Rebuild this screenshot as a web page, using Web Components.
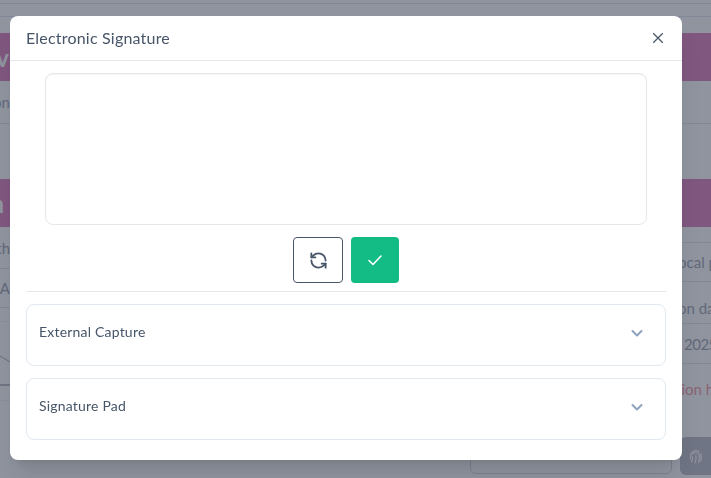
<!DOCTYPE html>
<html lang="en">
<head>
<meta charset="utf-8">
<title>Electronic Signature</title>
<style>
  html, body { margin: 0; height: 100%; overflow: hidden; }
  body { font-family: Lato, "Noto Sans", sans-serif; background: #fff; }
</style>
</head>
<body>
<page-behind></page-behind>
<signature-modal heading="Electronic Signature">
  <accordion-row label="External Capture"></accordion-row>
  <accordion-row label="Signature Pad"></accordion-row>
</signature-modal>

<script>
class PageBehind extends HTMLElement {
  connectedCallback() {
    const shadow = this.attachShadow({ mode: 'open' });
    shadow.innerHTML = `
      <style>
        :host {
          display: flex;
          flex-direction: column;
          height: 478px;
          overflow: hidden;
          color: #a4a9b3;
          font-size: 15px;
        }
        .topbar { height: 12px; margin-top: 3px; border-top: 1px solid #e2e8f0; border-bottom: 1px solid #e2e8f0; }
        .band {
          flex: none;
          height: 48px;
          background: #e086bf;
          color: #fff;
          display: flex;
          align-items: center;
          font-size: 24px;
          font-weight: 700;
        }
        .band span { flex: none; width: 9px; display: flex; justify-content: flex-end; overflow: hidden; white-space: nowrap; }
        .first { margin-top: 16px; }
        .sub { height: 42px; display: flex; align-items: center; border-bottom: 1px solid #e2e8f0; }
        .clip { flex: none; width: 10px; display: flex; justify-content: flex-end; overflow: hidden; white-space: nowrap; }
        .second { margin-top: 55px; }
        .second span { width: 4px; }
        .cols { flex: 1; display: flex; justify-content: space-between; }
        .left { width: 60px; display: flex; flex-direction: column; }
        .left .row { height: 38px; display: flex; align-items: center; border-bottom: 1px solid #e2e8f0; }
        .left .row:first-child { height: 41px; }
        .chart { display: block; margin-top: 13px; }
        .right { width: 241px; display: flex; flex-direction: column; }
        .right .row { display: flex; align-items: center; border-bottom: 1px solid #e2e8f0; white-space: nowrap; }
        .gap { height: 15px; border-bottom: 1px solid #e2e8f0; }
        .warn { height: 50px; display: flex; align-items: center; color: #f59ca5; white-space: nowrap; padding-left: 174px; }
        .actions { display: flex; gap: 8px; margin-top: 23px; }
        .input {
          flex: none;
          width: 202px;
          height: 37px;
          box-sizing: border-box;
          border: 1px solid #d5d9e0;
          border-radius: 6px;
          display: flex;
          align-items: center;
          justify-content: flex-end;
          padding: 0 50px 9px 0;
          font-size: 14px;
          white-space: nowrap;
        }
        .finger { flex: 1; height: 38px; background: #c1c1ca; border-radius: 6px 0 0 6px; display: flex; align-items: center; padding-left: 7px; }
      </style>
      <div class="topbar"></div>
      <div class="band first"><span>Rev</span></div>
      <div class="sub"><span class="clip">Version</span></div>
      <div class="band second"><span>Main</span></div>
      <div class="cols">
        <div class="left">
          <div class="row"><span class="clip">With</span></div>
          <div class="row"><span class="clip">A</span></div>
          <svg class="chart" width="60" height="80" viewBox="0 0 60 80" fill="none">
            <path d="M0 0H60" stroke="#e2e8f0"/>
            <path d="M0 35L12 42" stroke="#b0b4bc"/>
            <path d="M0 64H60" stroke="#a8acb4" stroke-width="1.5"/>
            <path d="M0 80H60" stroke="#e2e8f0"/>
          </svg>
        </div>
        <div class="right">
          <div class="gap"></div>
          <div class="row" style="height:38px;padding-left:164px">Fiscal local period</div>
          <div class="row" style="height:42px;padding-left:167px;padding-top:10px;box-sizing:border-box">Emission date</div>
          <div class="row" style="height:39px;padding-left:214px;letter-spacing:-0.5px">2025</div>
          <div class="warn">Emission hour</div>
          <div class="actions">
            <div class="input">Waiting for signing</div>
            <div class="finger">
              <svg width="18" height="18" viewBox="0 0 24 24" fill="none" stroke="#fff" stroke-width="1.6" stroke-linecap="round">
                <path d="M12 11v3c0 2.500-.4 4.800-1.200 7"/>
                <path d="M8.200 9.500A4.500 4.500 0 0 1 16.500 12c0 3-.3 5.800-1 8.500"/>
                <path d="M7.500 13c0 2.500-.4 4.700-1.300 6.500"/>
                <path d="M4.500 16c.3-1.300.5-2.600.5-4a7 7 0 0 1 11-5.700"/>
                <path d="M18.500 9c.4 1 .5 2 .5 3 0 2.500-.2 4.500-.6 6.500"/>
              </svg>
            </div>
          </div>
        </div>
      </div>
    `;
  }
}

class SignatureModal extends HTMLElement {
  connectedCallback() {
    const shadow = this.attachShadow({ mode: 'open' });
    shadow.innerHTML = `
      <style>
        :host {
          position: fixed;
          inset: 0;
          display: block;
          background: rgba(31, 41, 64, 0.5);
          color: #475569;
        }
        .dialog {
          position: absolute;
          left: 10px;
          top: 16px;
          width: 672px;
          height: 444px;
          background: #fff;
          border-radius: 8px;
          box-shadow: 0 20px 25px -5px rgba(0, 0, 0, 0.1), 0 8px 10px -6px rgba(0, 0, 0, 0.1);
          display: flex;
          flex-direction: column;
        }
        header {
          flex: none;
          height: 45px;
          box-sizing: border-box;
          padding: 0 16px 2px;
          display: flex;
          align-items: center;
          justify-content: space-between;
          border-bottom: 1px solid #e5e7eb;
          font-size: 16px;
          letter-spacing: 0.2px;
        }
        .close { width: 16px; height: 16px; padding: 0; border: 0; background: none; color: #475569; display: flex; transform: translateY(1px); }
        .body { padding: 12px 16px 0; display: flex; flex-direction: column; }
        .pad {
          align-self: center;
          width: 602px;
          height: 152px;
          box-sizing: border-box;
          border: 1px solid #e5e7eb;
          border-radius: 8px;
          box-shadow: inset 0 1px 2px rgba(0, 0, 0, 0.04);
        }
        .tools { display: flex; justify-content: center; gap: 8px; margin-top: 12px; }
        .tools button { height: 46px; padding: 0; border-radius: 4px; display: flex; align-items: center; justify-content: center; }
        .reset { width: 50px; background: #fff; border: 1px solid #475569; color: #475569; }
        .ok { width: 48px; background: #13bc85; border: 0; color: #fff; }
        hr { width: 100%; margin: 8px 0 12px; border: 0; border-top: 1px solid #e5e7eb; }
        .list { display: flex; flex-direction: column; gap: 12px; }
      </style>
      <div class="dialog">
        <header>
          <span>${this.getAttribute('heading')}</span>
          <button class="close" aria-label="Close">
            <svg width="16" height="16" viewBox="0 0 16 16" fill="none" stroke="currentColor" stroke-width="1.25"><path d="M3.250 3.250l9.500 9.500M12.750 3.250l-9.500 9.500"/></svg>
          </button>
        </header>
        <div class="body">
          <div class="pad"></div>
          <div class="tools">
            <button class="reset" aria-label="Reset">
              <svg width="19" height="19" viewBox="0 0 24 24" fill="none" stroke="currentColor" stroke-width="2.300" stroke-linecap="round" stroke-linejoin="round">
                <path d="M21 12a9 9 0 0 0-9-9 9.750 9.750 0 0 0-6.740 2.740L3 8"/>
                <path d="M3 3v5h5"/>
                <path d="M3 12a9 9 0 0 0 9 9 9.750 9.750 0 0 0 6.740-2.740L21 16"/>
                <path d="M16 16h5v5"/>
              </svg>
            </button>
            <button class="ok" aria-label="Confirm">
              <svg width="16" height="16" viewBox="0 0 16 16" fill="none" stroke="currentColor" stroke-width="1.6" stroke-linecap="round" stroke-linejoin="round"><path d="M2 8.500l4 4 8-8.500"/></svg>
            </button>
          </div>
          <hr>
          <div class="list"><slot></slot></div>
        </div>
      </div>
    `;
  }
}

class AccordionRow extends HTMLElement {
  connectedCallback() {
    const shadow = this.attachShadow({ mode: 'open' });
    shadow.innerHTML = `
      <style>
        :host {
          display: block;
          height: 62px;
          box-sizing: border-box;
          border: 1px solid #e2e8f0;
          border-radius: 8px;
          color: #475569;
          font-size: 14px;
          letter-spacing: 0.2px;
        }
        .head { display: flex; justify-content: space-between; align-items: flex-start; padding: 18px 20px 0 12px; }
        svg { display: block; margin-top: 2px; }
      </style>
      <div class="head">
        <span>${this.getAttribute('label')}</span>
        <svg width="16" height="16" viewBox="0 0 16 16" fill="none" stroke="#8da2bf" stroke-width="2" stroke-linecap="round" stroke-linejoin="round"><path d="M3.500 6l4.500 4.500L12.500 6"/></svg>
      </div>
    `;
  }
}

customElements.define('page-behind', PageBehind);
customElements.define('signature-modal', SignatureModal);
customElements.define('accordion-row', AccordionRow);
</script>
</body>
</html>
